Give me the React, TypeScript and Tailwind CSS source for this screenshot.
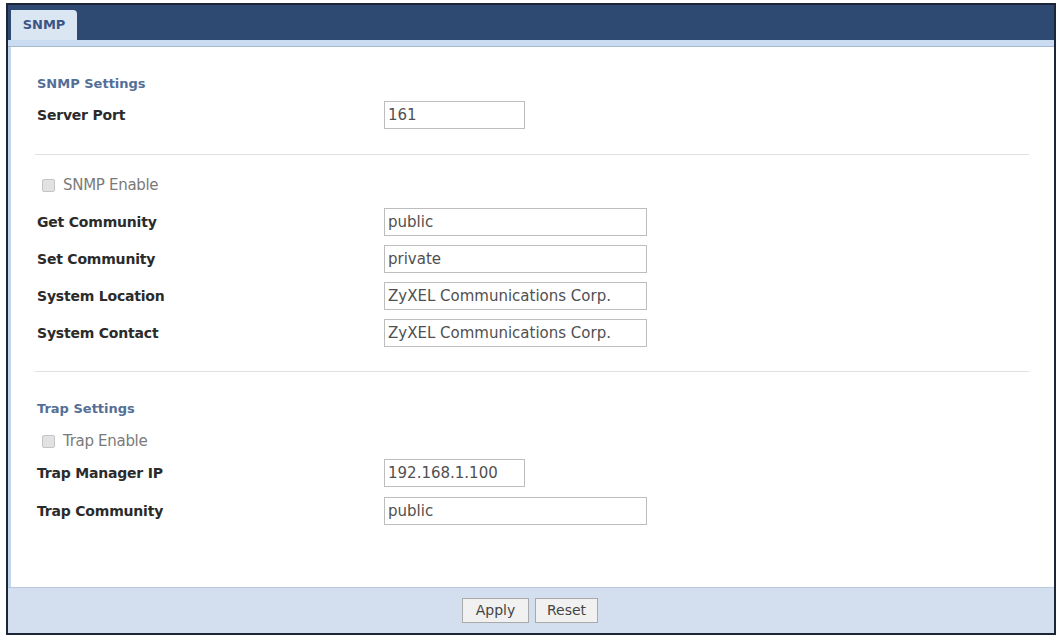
import React from "react";

const font = { fontFamily: '"DejaVu Sans", "Liberation Sans", sans-serif' };

function Field({ label, value, wide, className = "" }: { label: string; value: string; wide?: boolean; className?: string }) {
  return (
    <div className={`flex h-[28px] items-center ${className}`}>
      <div className="w-[347px] text-[14px] font-bold tracking-[-0.2px] text-[#2b2b2b]">{label}</div>
      <div
        className={`flex h-[28px] items-center border border-[#bdbdbd] bg-white pl-[3px] text-[15px] text-[#505050] ${
          wide ? "w-[263px]" : "w-[141px]"
        }`}
      >
        {value}
      </div>
    </div>
  );
}

function Check({ label, className = "" }: { label: string; className?: string }) {
  return (
    <div className={`flex h-[20px] items-center pl-[5px] ${className}`}>
      <span className="h-[13px] w-[13px] rounded-[2px] border border-[#c4c4c4] bg-[#e2e2e2]" />
      <span className="ml-[8px] text-[15px] tracking-[-0.3px] text-[#7a7a7a]">{label}</span>
    </div>
  );
}

function Title({ text, className = "" }: { text: string; className?: string }) {
  return (
    <div className={`flex h-[20px] items-center text-[13px] font-bold text-[#546f97] ${className}`}>{text}</div>
  );
}

export default function App() {
  return (
    <div className="h-[637px] w-[1062px] bg-white px-[6px] pb-[2px] pt-[3px]" style={font}>
      <div className="flex h-full flex-col border-2 border-[#1d2636]">
        {/* tab strip */}
        <div className="flex h-[35px] items-end bg-[#2f4a72] pl-[3px]">
          <div className="flex h-[30px] w-[66px] items-center justify-center rounded-tr-[4px] bg-[#dbe6f3] text-[13px] font-bold text-[#3c5583]">
            SNMP
          </div>
        </div>
        <div className="h-[7px] border-b border-[#a7b9d0] bg-[#cadcf1]" />

        {/* form body */}
        <div className="flex flex-1 flex-col border-l-[3px] border-[#c3d5ec] bg-white pl-[26px] pr-[25px]">
          <Title text="SNMP Settings" className="mt-[27px]" />
          <Field label="Server Port" value="161" className="mt-[7px]" />
          <div className="-ml-[2px] mt-[25px] h-px bg-[#e0e0e0]" />

          <Check label="SNMP Enable" className="mt-[20px]" />
          <Field label="Get Community" value="public" wide className="mt-[13px]" />
          <Field label="Set Community" value="private" wide className="mt-[9px]" />
          <Field label="System Location" value="ZyXEL Communications Corp." wide className="mt-[9px]" />
          <Field label="System Contact" value="ZyXEL Communications Corp." wide className="mt-[9px]" />
          <div className="-ml-[2px] mt-[24px] h-px bg-[#e0e0e0]" />

          <Title text="Trap Settings" className="mt-[27px]" />
          <Check label="Trap Enable" className="mt-[12px]" />
          <Field label="Trap Manager IP" value="192.168.1.100" className="mt-[8px]" />
          <Field label="Trap Community" value="public" wide className="mt-[10px]" />
        </div>

        {/* buttons */}
        <div className="flex h-[46px] items-center justify-center gap-[6px] border-t border-[#b9c9dd] bg-[#d3dfee] pr-[2px]">
          <button className="h-[25px] w-[67px] border border-[#a9a9a9] bg-[#f1f1f1] text-[14px] text-[#444]">Apply</button>
          <button className="h-[25px] w-[63px] border border-[#a9a9a9] bg-[#f1f1f1] text-[14px] text-[#444]">Reset</button>
        </div>
      </div>
    </div>
  );
}
